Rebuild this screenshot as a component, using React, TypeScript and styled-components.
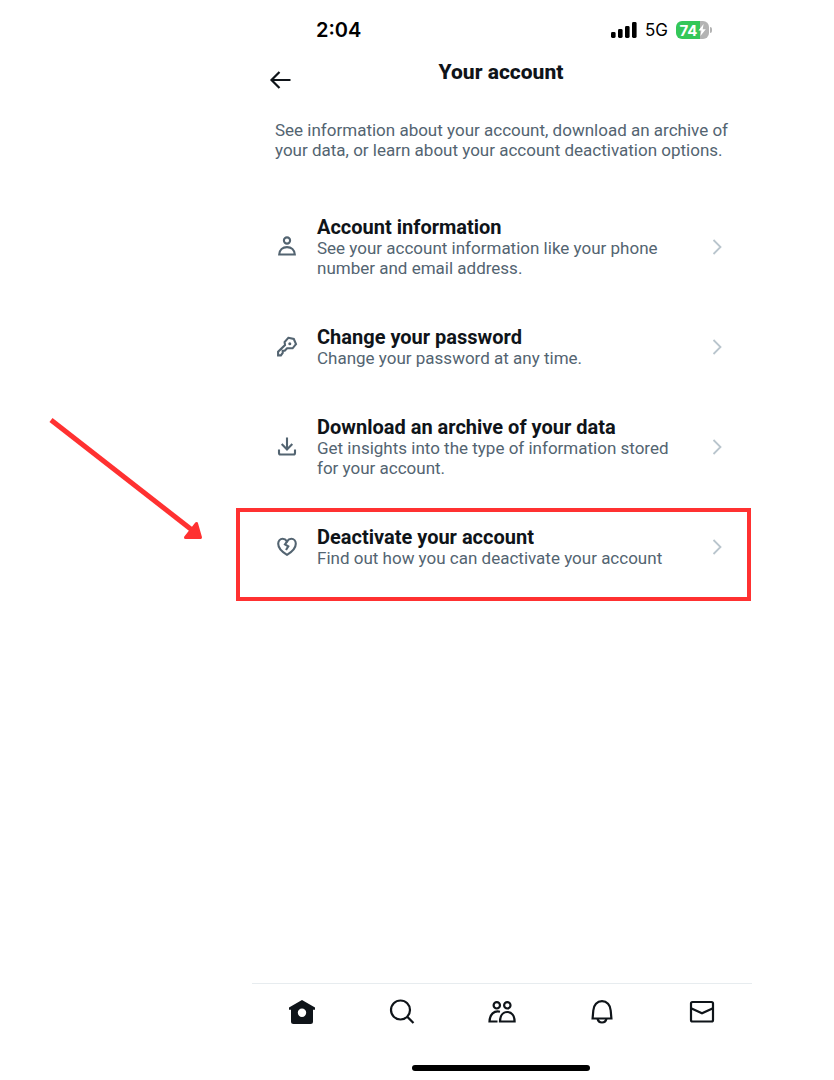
import React from "react";
import styled, { createGlobalStyle } from "styled-components";

const GlobalStyle = createGlobalStyle`
  *, *::before, *::after { box-sizing: border-box; }
  body {
    margin: 0;
    background: #ffffff;
    color: #0f1419;
    font-family: Roboto, "Liberation Sans", sans-serif;
  }
  button { font: inherit; color: inherit; background: none; border: 0; padding: 0; cursor: pointer; }
  svg { display: block; flex: none; }
  h1, h2, p, ul { margin: 0; padding: 0; }
`;

const Page = styled.div`
  display: grid;
  grid-template-columns: 3fr minmax(0, 498px) 1fr;
  min-height: 100vh;
`;

const Phone = styled.div`
  grid-column: 2;
  display: flex;
  flex-direction: column;
`;

const StatusBar = styled.div`
  display: flex;
  align-items: center;
  justify-content: space-between;
  height: 60px;
  padding: 0 38px 0 64px;
  color: #000000;
  font-family: Inter, sans-serif;
`;

const Clock = styled.time`
  font-size: 20px;
  font-weight: 600;
`;

const StatusIcons = styled.div`
  display: flex;
  align-items: center;
  gap: 8px;
`;

const Network = styled.span`
  font-size: 17px;
  font-weight: 400;
`;

const Battery = styled.div`
  display: flex;
  align-items: center;
  gap: 1px;
`;

const BatteryBody = styled.div`
  display: flex;
  align-items: center;
  justify-content: center;
  width: 33px;
  height: 18px;
  border-radius: 6px;
  background: linear-gradient(to right, #34c759 74%, #b3b3b3 74%);
  color: #ffffff;
  font-size: 15px;
  font-weight: 700;
`;

const BatteryTip = styled.span`
  width: 2px;
  height: 6px;
  border-radius: 0 2px 2px 0;
  background: #b3b3b3;
`;

const Header = styled.header`
  display: grid;
  grid-template-columns: 40px 1fr 40px;
  height: 60px;
  padding: 0 16px;
`;

const BackButton = styled.button`
  display: flex;
  align-items: center;
  height: 40px;
`;

const Title = styled.h1`
  font-size: 21px;
  line-height: 24px;
  font-weight: 800;
  text-align: center;
`;

const Intro = styled.p`
  padding: 0 16px 0 23px;
  color: #536471;
  font-size: 17px;
  line-height: 20px;
`;

const Options = styled.ul`
  display: flex;
  flex-direction: column;
  gap: 48px;
  padding: 56px 25px 48px 24px;
  list-style: none;
`;

const OptionItem = styled.li`
  position: relative;
`;

const OptionButton = styled.button`
  display: grid;
  grid-template-columns: 22px minmax(0, 1fr) 16px;
  align-items: center;
  column-gap: 19px;
  width: 100%;
  text-align: left;
  color: #536471;
`;

const OptionText = styled.span`
  display: block;
  max-width: 360px;
`;

const OptionTitle = styled.span`
  display: block;
  color: #0f1419;
  font-size: 20px;
  line-height: 22px;
  font-weight: 700;
`;

const OptionDetail = styled.span`
  display: block;
  font-size: 17px;
  line-height: 20px;
`;

const Highlight = styled.div`
  position: absolute;
  inset: -18px -26px -33px -40px;
  border: 4px solid #ff3131;
  pointer-events: none;
`;

const PointerArrow = styled.svg`
  position: absolute;
  right: 100%;
  bottom: 26px;
  margin-right: 70px;
  pointer-events: none;
`;

const TabBar = styled.nav`
  display: grid;
  grid-template-columns: repeat(5, 1fr);
  height: 82px;
  margin: auto -2px 0 0;
  border-top: 1px solid #e7ecef;
`;

const Tab = styled.button`
  display: flex;
  align-items: center;
  justify-content: center;
  height: 56px;
`;

const HomeIndicator = styled.div`
  align-self: center;
  width: 178px;
  height: 6px;
  margin-bottom: 9px;
  border-radius: 3px;
  background: #000000;
`;

const SignalIcon = () => (
  <svg width="26" height="16" viewBox="0 0 26 16" fill="#000" aria-hidden="true">
    <rect x="0" y="10" width="4.6" height="6" rx="1.4" />
    <rect x="7" y="7" width="4.6" height="9" rx="1.4" />
    <rect x="14" y="4" width="4.6" height="12" rx="1.4" />
    <rect x="21" y="0" width="4.6" height="16" rx="1.4" />
  </svg>
);

const BoltIcon = () => (
  <svg width="8" height="12" viewBox="0 0 8 12" fill="#fff" aria-hidden="true">
    <path d="M5.6 0 0.4 6.6h3L2.4 12 7.8 5.2H4.7z" />
  </svg>
);

const BackIcon = () => (
  <svg width="24" height="24" viewBox="0 0 24 24" fill="none" stroke="#0f1419" strokeWidth="2.2" aria-hidden="true">
    <path d="M11.500 4 3.500 12l8 8M3.500 12H22.500" />
  </svg>
);

const lineIcon = {
  width: 22,
  height: 22,
  viewBox: "0 0 22 22",
  fill: "none",
  stroke: "currentColor",
  strokeWidth: 2.1,
  "aria-hidden": true,
} as const;

const PersonIcon = () => (
  <svg {...lineIcon}>
    <circle cx="11" cy="4.500" r="3.100" />
    <path d="M3.200 18.500c.3-4.600 3.500-7.400 7.800-7.400s7.500 2.800 7.800 7.400z" />
  </svg>
);

const KeyIcon = () => (
  <svg {...lineIcon}>
    <path d="M12.300 1.800 17.800 3 20 8.100 16.600 12.300 11.100 12.200 8.700 14.800H6.700V16.900L4.900 19.400H2.100V15.800L9 9 8.600 6z" />
    <circle cx="13.800" cy="7.800" r="1.500" fill="currentColor" stroke="none" />
  </svg>
);

const DownloadIcon = () => (
  <svg {...lineIcon}>
    <path d="M11 1.500v11.500M5.700 8.100 11 13.400l5.300-5.300M3 13.500v3.500a1.500 1.500 0 0 0 1.500 1.500h13a1.500 1.500 0 0 0 1.500-1.500V13.500" />
  </svg>
);

const BrokenHeartIcon = () => (
  <svg {...lineIcon}>
    <path d="M11 18.800C5.500 15.500 2.200 11.500 2.200 7.700c0-3 2-4.900 4.400-4.900 1.800 0 3.300.9 4.400 2.500 1.100-1.600 2.600-2.500 4.400-2.500 2.400 0 4.400 1.900 4.400 4.900 0 3.800-3.300 7.800-8.800 11.100z" />
    <path d="M11.600 4.700 9 8.400l3.300 1.900-2.300 3.700" />
  </svg>
);

const ChevronIcon = () => (
  <svg width="16" height="16" viewBox="0 0 16 16" fill="none" stroke="#b9c5cd" strokeWidth="1.8" aria-hidden="true">
    <path d="M4.500 1 11.500 8 4.500 15" />
  </svg>
);

const tabIcon = {
  width: 28,
  height: 28,
  viewBox: "0 0 28 28",
  fill: "none",
  stroke: "#0f1419",
  strokeWidth: 2.2,
  "aria-hidden": true,
} as const;

const HomeIcon = () => (
  <svg {...tabIcon} fill="#0f1419" stroke="none">
    <path
      fillRule="evenodd"
      d="M14 2 27 9.500v2.300h-2v11.700a2.500 2.500 0 0 1-2.500 2.500h-17A2.500 2.500 0 0 1 3 23.500V11.800H1V9.500zM14 10.500a4.200 4.200 0 1 0 0 8.400 4.200 4.200 0 0 0 0-8.400z"
    />
  </svg>
);

const SearchIcon = () => (
  <svg {...tabIcon}>
    <circle cx="12.500" cy="12" r="9.500" />
    <path d="M19.200 18.700 25.500 25" />
  </svg>
);

const CommunityIcon = () => (
  <svg {...tabIcon}>
    <circle cx="8.800" cy="7.300" r="3.200" />
    <circle cx="19.300" cy="7.300" r="3.200" />
    <path d="M12 13.700C6 12.300 1.800 16.300 1.500 23.500H9.500" />
    <path d="M12 23.500c.1-5.800 2.800-9.500 7.300-9.500s7.200 3.700 7.300 9.500z" />
  </svg>
);

const BellIcon = () => (
  <svg {...tabIcon}>
    <path d="M5.300 12.500c.3-5.600 3.900-9.400 8.700-9.400s8.400 3.800 8.700 9.400L23.400 20.500H4.600z" />
    <path d="M9.500 20.500c.5 2.600 2.200 4 4.500 4s4-1.400 4.500-4" />
  </svg>
);

const MailIcon = () => (
  <svg {...tabIcon}>
    <rect x="3" y="4" width="22" height="19.500" rx="1.500" />
    <path d="M3 10.200l11 5 11-5" />
  </svg>
);

const RedArrow = () => (
  <PointerArrow width="160" height="128" viewBox="46 414 160 128" aria-hidden="true">
    <path d="M51 420 192 530" stroke="#ff3131" strokeWidth="5" />
    <path
      d="M196.500 523.500 200.500 537.500H185.500z"
      fill="#ff3131"
      stroke="#ff3131"
      strokeWidth="3"
      strokeLinejoin="round"
    />
  </PointerArrow>
);

const options = [
  {
    title: "Account information",
    detail: "See your account information like your phone number and email address.",
    Icon: PersonIcon,
  },
  { title: "Change your password", detail: "Change your password at any time.", Icon: KeyIcon },
  {
    title: "Download an archive of your data",
    detail: "Get insights into the type of information stored for your account.",
    Icon: DownloadIcon,
  },
  {
    title: "Deactivate your account",
    detail: "Find out how you can deactivate your account",
    Icon: BrokenHeartIcon,
    highlighted: true,
  },
];

const tabs = [
  { label: "Home", Icon: HomeIcon },
  { label: "Search", Icon: SearchIcon },
  { label: "Communities", Icon: CommunityIcon },
  { label: "Notifications", Icon: BellIcon },
  { label: "Messages", Icon: MailIcon },
];

export default function App() {
  return (
    <Page>
      <GlobalStyle />
      <Phone>
        <StatusBar>
          <Clock>2:04</Clock>
          <StatusIcons>
            <SignalIcon />
            <Network>5G</Network>
            <Battery>
              <BatteryBody>
                74
                <BoltIcon />
              </BatteryBody>
              <BatteryTip />
            </Battery>
          </StatusIcons>
        </StatusBar>
        <Header>
          <BackButton aria-label="Back">
            <BackIcon />
          </BackButton>
          <Title>Your account</Title>
        </Header>
        <main>
          <Intro>
            See information about your account, download an archive of your data, or learn about your
            account deactivation options.
          </Intro>
          <Options>
            {options.map(({ title, detail, Icon, highlighted }) => (
              <OptionItem key={title}>
                <OptionButton>
                  <Icon />
                  <OptionText>
                    <OptionTitle>{title}</OptionTitle>
                    <OptionDetail>{detail}</OptionDetail>
                  </OptionText>
                  <ChevronIcon />
                </OptionButton>
                {highlighted && (
                  <>
                    <Highlight />
                    <RedArrow />
                  </>
                )}
              </OptionItem>
            ))}
          </Options>
        </main>
        <TabBar>
          {tabs.map(({ label, Icon }) => (
            <Tab key={label} aria-label={label}>
              <Icon />
            </Tab>
          ))}
        </TabBar>
        <HomeIndicator />
      </Phone>
    </Page>
  );
}
